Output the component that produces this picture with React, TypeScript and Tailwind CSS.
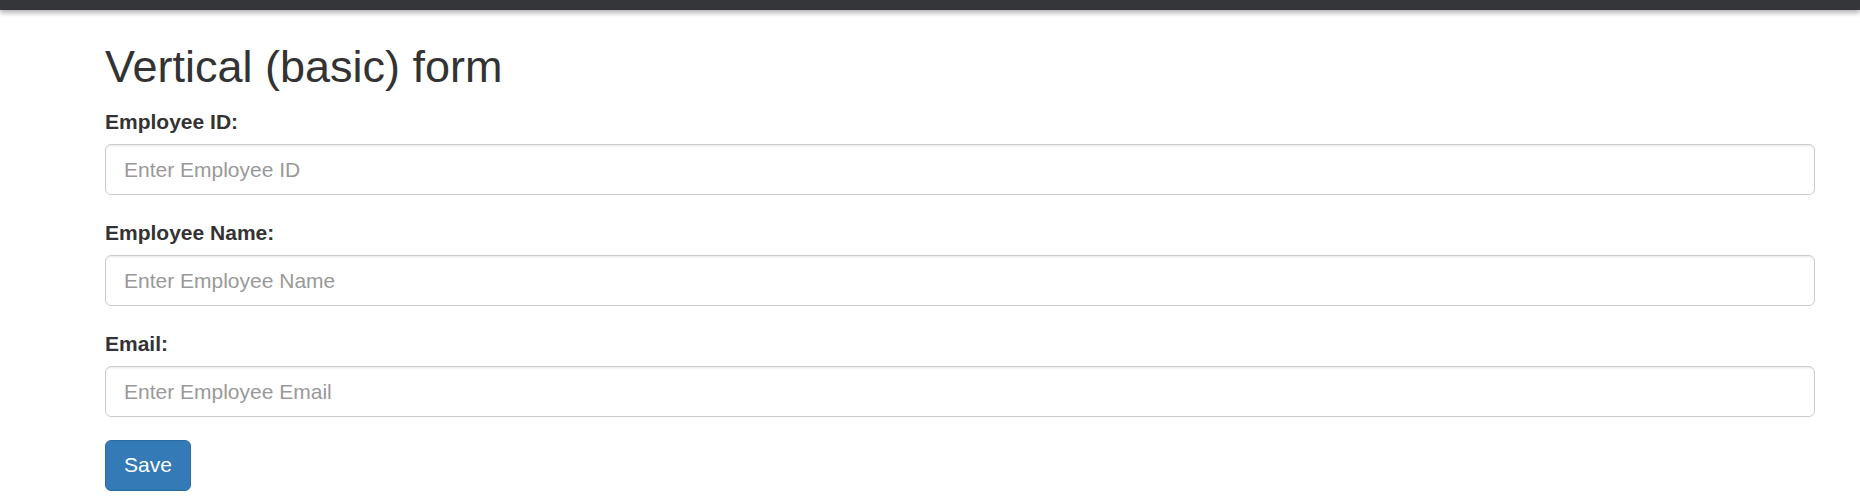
import React from "react";

const fields = [
  { label: "Employee ID:", placeholder: "Enter Employee ID", type: "text" },
  { label: "Employee Name:", placeholder: "Enter Employee Name", type: "text" },
  { label: "Email:", placeholder: "Enter Employee Email", type: "email" },
];

export default function App() {
  return (
    <div
      className="min-h-[500px] bg-white text-[#333333]"
      style={{ fontFamily: '"Liberation Sans", Arial, Helvetica, sans-serif' }}
    >
      <div className="h-[10px] bg-[#35363a] shadow-[0_3px_5px_rgba(0,0,0,0.3)]" />
      <div className="pl-[105px] pr-[45px]">
        <h2 className="mt-[32px] mb-[15px] text-[45px] leading-[1.1] font-normal text-[#333333]">
          Vertical (basic) form
        </h2>
        <form onSubmit={(e) => e.preventDefault()}>
          {fields.map((f) => (
            <div key={f.label} className="mb-[22.5px]">
              <label className="block mb-[7.5px] text-[21px] leading-[30px] font-bold text-[#333333]">
                {f.label}
              </label>
              <input
                type={f.type}
                placeholder={f.placeholder}
                className="block w-full h-[51px] px-[18px] py-[9px] text-[21px] leading-[30px] text-[#555555] bg-white border border-[#cccccc] rounded-[6px] shadow-[inset_0_1.5px_1.5px_rgba(0,0,0,0.075)] placeholder:text-[#999999] outline-none"
              />
            </div>
          ))}
          <button
            type="submit"
            className="h-[51px] px-[18px] text-[21px] leading-[30px] text-white bg-[#337ab7] border border-[#2e6da4] rounded-[6px]"
          >
            Save
          </button>
        </form>
      </div>
    </div>
  );
}
